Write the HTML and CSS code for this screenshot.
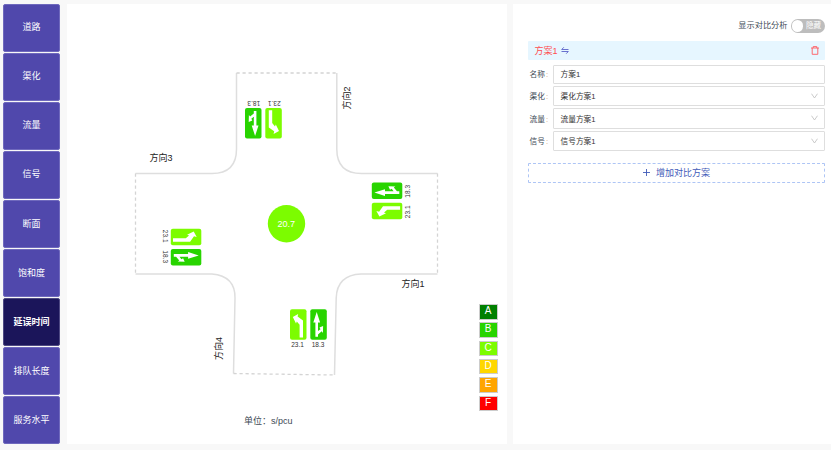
FILE: index.html
```html
<!DOCTYPE html>
<html lang="zh-CN">
<head>
<meta charset="utf-8">
<title>延误时间</title>
<link rel="stylesheet" href="styles.css">
</head>
<body>
<div class="app">
  <nav class="side">
    <button>道路</button>
    <button>渠化</button>
    <button>流量</button>
    <button>信号</button>
    <button>断面</button>
    <button>饱和度</button>
    <button class="active">延误时间</button>
    <button>排队长度</button>
    <button>服务水平</button>
  </nav>
  <main class="canvas">
    <svg class="map" viewBox="67 4 440 440" width="440" height="440">
      <defs>
        <g id="left-turn">
          <rect width="16.5" height="30.5" rx="2" fill="#7cfc00"/>
          <path d="M9.6 28.3V15.5L6.8 12.2L6 14.2L2.8 7.6L8.2 4.6L7.6 7.3L13 11.2V28.3Z" fill="#fff"/>
        </g>
        <g id="straight-right">
          <rect width="16.5" height="30.5" rx="2" fill="#28d400"/>
          <path d="M6.4 2.6L9.8 13.2H7.7V21.8L10.2 19.9L9.2 18.2L12.8 16.6L12.6 23.6L11.4 22L7.7 25.2V27.5H5.1V13.2H3Z" fill="#fff"/>
        </g>
        <g id="approach">
          <use href="#left-turn"/>
          <use href="#straight-right" x="20.3"/>
          <text class="delay" x="7.5" y="38">23.1</text>
          <text class="delay" x="28" y="38">18.3</text>
        </g>
      </defs>
      <g class="curb">
        <path d="M236.5 73V149Q236.5 173.5 212 173.5H135.5"/>
        <path d="M336.8 73V149Q336.8 173.5 361.5 173.5H437.5"/>
        <path d="M135.5 274H212Q235.3 276 235 298L233.5 373.5"/>
        <path d="M437.5 274H361Q337 275 336.2 298L334.5 375"/>
      </g>
      <g class="stop">
        <path d="M236.5 73H337"/>
        <path d="M135.5 173.5V274"/>
        <path d="M437.5 173.5V274"/>
        <path d="M233.5 373.5L334.5 375"/>
      </g>
      <use href="#approach" transform="translate(290 309.3)"/>
      <use href="#approach" transform="translate(281.8 138.6) rotate(180)"/>
      <use href="#approach" transform="translate(371.8 219.3) rotate(-90)"/>
      <use href="#approach" transform="translate(201.3 228.7) rotate(90)"/>
      <circle cx="286.5" cy="223.7" r="18.7" fill="#7cfc00"/>
      <text class="total" x="286.2" y="227">20.7</text>
      <text class="dir" x="149.5" y="160.5">方向3</text>
      <text class="dir" x="401.5" y="287">方向1</text>
      <text class="dir" transform="translate(350.3 109.5) rotate(-90)">方向2</text>
      <text class="dir" transform="translate(221.8 360) rotate(-90)">方向4</text>
      <text class="unit" x="244" y="423.5">单位：s/pcu</text>
    </svg>
    <div class="legend">
      <span class="lv-a">A</span>
      <span class="lv-b">B</span>
      <span class="lv-c">C</span>
      <span class="lv-d">D</span>
      <span class="lv-e">E</span>
      <span class="lv-f">F</span>
    </div>
  </main>
  <aside class="panel">
    <div class="compare">显示对比分析<span class="switch"><i></i>隐藏</span></div>
    <div class="plan-head">
      <span>方案1</span>
      <svg class="swap" width="8" height="7" viewBox="0 0 8 7"><path d="M2.8 .3L.7 2.5H7.5M.5 4.5H7.3L5.2 6.7"/></svg>
      <svg class="trash" width="8" height="9" viewBox="0 0 8 9"><path d="M0 2H8M2.2 2V.6H5.8V2M1.2 2V8.3H6.8V2"/></svg>
    </div>
    <div class="row first"><label>名称<b>:</b></label><div class="field">方案1</div></div>
    <div class="row"><label>渠化<b>:</b></label><div class="field">渠化方案1<svg width="7" height="6" viewBox="0 0 7 6"><path d="M.5 .7L3.5 5L6.5 .7"/></svg></div></div>
    <div class="row"><label>流量<b>:</b></label><div class="field">流量方案1<svg width="7" height="6" viewBox="0 0 7 6"><path d="M.5 .7L3.5 5L6.5 .7"/></svg></div></div>
    <div class="row"><label>信号<b>:</b></label><div class="field">信号方案1<svg width="7" height="6" viewBox="0 0 7 6"><path d="M.5 .7L3.5 5L6.5 .7"/></svg></div></div>
    <button class="add"><svg width="7" height="7" viewBox="0 0 7 7"><path d="M3.5 0V7M0 3.5H7"/></svg>增加对比方案</button>
  </aside>
</div>
</body>
</html>
```
FILE: styles.css
```css
* { box-sizing: border-box; }
body {
  margin: 0;
  background: #f8f8f8;
  font-family: "Liberation Sans", "Noto Sans CJK SC", sans-serif;
  color: #404a55;
}
button { font: inherit; padding: 0; cursor: pointer; }
.app {
  display: grid;
  grid-template-columns: 57px 440px 318px;
  column-gap: 6.5px;
  height: 450px;
  padding: 4px 0 6px 3px;
  overflow: hidden;
}
.side { display: grid; grid-template-rows: repeat(9, 47.9px); row-gap: 1.13px; }
.side button {
  padding-bottom: 2px;
  border: 1px solid #6f69bd;
  border-radius: 2px;
  background: #5048ac;
  color: #fff;
  font-size: 9px;
}
.side .active { background: #1b155a; border-color: #4e4983; font-weight: bold; }
.canvas { position: relative; background: #fff; }
.map { display: block; }
.curb path { fill: none; stroke: #dedede; stroke-width: 1.5; }
.stop path { fill: none; stroke: #d4d4d4; stroke-width: 1.3; stroke-dasharray: 3.2 2.8; }
.delay { font-size: 6.5px; fill: #333; text-anchor: middle; }
.total { font-size: 9px; fill: #fff; text-anchor: middle; }
.dir { font-size: 9px; fill: #222; }
.unit { font-size: 9px; fill: #404a55; }
.legend {
  position: absolute;
  right: 9px;
  bottom: 33px;
  display: grid;
  grid-template-rows: repeat(6, 15.5px);
  row-gap: 2.8px;
}
.legend span {
  width: 19px;
  border: 1px solid #ccc;
  color: #fff;
  font-size: 10px;
  line-height: 12.5px;
  text-align: center;
}
.lv-a { background: #008000; }
.lv-b { background: #28d400; }
.lv-c { background: #7cfc00; }
.lv-d { background: #ffd700; }
.lv-e { background: #ffa500; }
.lv-f { background: #f00; }
.panel { background: #fff; padding: 15px 6px 0 15px; }
.compare {
  display: flex;
  justify-content: flex-end;
  align-items: center;
  height: 14px;
  gap: 3px;
  font-size: 8.2px;
  line-height: 10px;
  padding-bottom: 1px;
}
.switch {
  display: flex;
  align-items: center;
  gap: 3px;
  width: 34.5px;
  height: 13.5px;
  margin-top: 1px;
  padding: 0 1px;
  border-radius: 7px;
  background: #bdbdbd;
  color: #fff;
  font-size: 7.5px;
}
.switch i { width: 11.5px; height: 11.5px; border-radius: 50%; background: #fff; }
.plan-head {
  display: flex;
  align-items: center;
  height: 18.7px;
  margin-top: 8.3px;
  padding: 0 6.5px;
  background: #e6f6ff;
  border-radius: 1px;
  color: #ff4d4f;
  font-size: 9px;
}
.plan-head svg { fill: none; stroke-width: .9; }
.swap { margin-left: 3px; stroke: #5a62c8; }
.trash { margin-left: auto; stroke: #ff5a5f; }
.row { display: flex; align-items: center; height: 20.5px; margin-top: 2px; font-size: 7.7px; }
.row.first { height: 19px; margin-top: 5px; }
.row label { width: 25px; padding: 0 0 1px 1.5px; white-space: nowrap; }
.row label b { margin-left: 1px; color: #d0a070; font-weight: normal; }
.field {
  flex: 1;
  display: flex;
  align-items: center;
  justify-content: space-between;
  height: 100%;
  padding: 0 6.5px 1px;
  border: 1px solid #dedede;
  border-radius: 1px;
  color: #333;
}
.field svg { fill: none; stroke: #c4c4c4; stroke-width: .9; }
.add {
  display: flex;
  align-items: center;
  justify-content: center;
  gap: 6px;
  width: 100%;
  height: 20px;
  margin-top: 11.5px;
  padding-bottom: 1px;
  border: 1px dashed #aec5f5;
  border-radius: 1px;
  background: #fff;
  color: #3f5ab8;
  font-size: 9px;
}
.add svg { stroke: #3f5ab8; stroke-width: .9; }
```
